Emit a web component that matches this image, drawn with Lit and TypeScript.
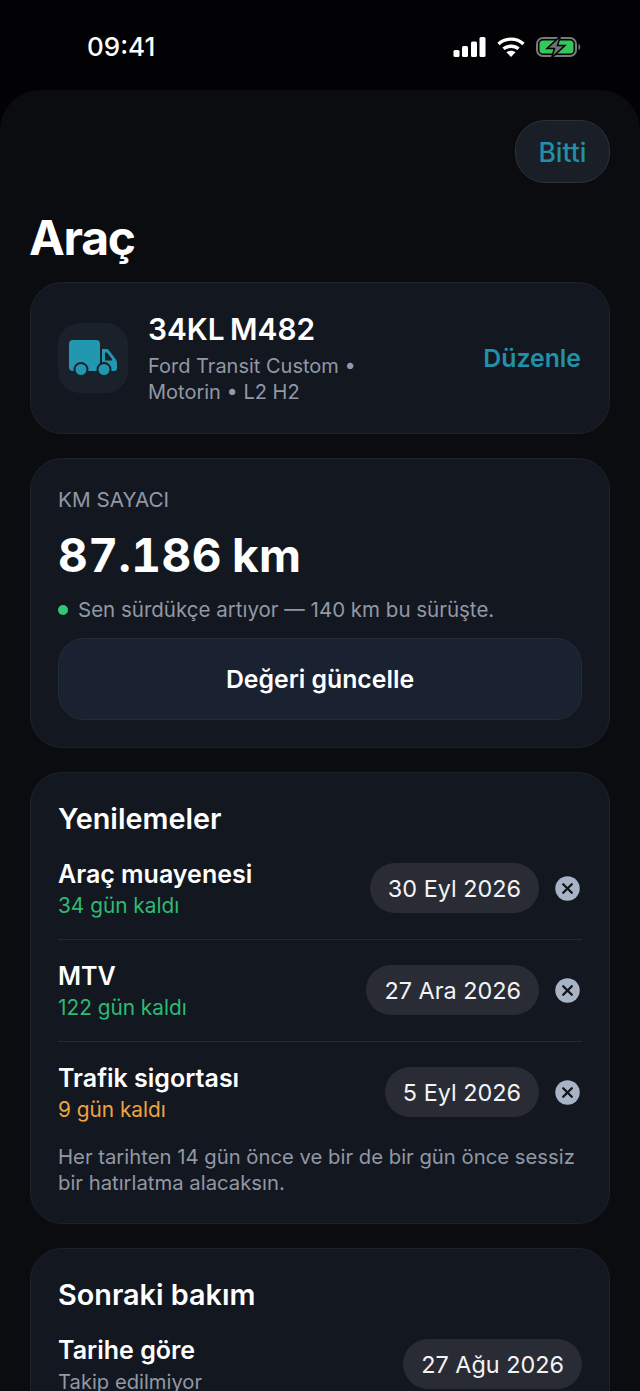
import { LitElement, html, css } from "lit";
import { customElement } from "lit/decorators.js";

const rows = [
  { name: "Araç muayenesi", left: "34 gün kaldı", date: "30 Eyl 2026", warn: false },
  { name: "MTV", left: "122 gün kaldı", date: "27 Ara 2026", warn: false },
  { name: "Trafik sigortası", left: "9 gün kaldı", date: "5 Eyl 2026", warn: true },
];

@customElement("app-root")
export class AppRoot extends LitElement {
  static styles = css`
    :host { display: block; width: 640px; height: 1391px; overflow: hidden; background: #020204; font-family: Inter, "Noto Sans", sans-serif; color: #fff; }
    * { box-sizing: border-box; }
    .status { height: 90px; display: flex; align-items: flex-start; justify-content: space-between; padding: 32px 59px 0 87px; }
    .time { font-size: 26px; line-height: 30px; font-weight: 500; }
    .icons { display: flex; align-items: center; gap: 11px; height: 30px; }
    .sheet { background: #0a0c10; border-radius: 40px 40px 0 0; padding: 30px 30px 0; height: 1301px; display: flex; flex-direction: column; }
    .top { display: flex; justify-content: flex-end; }
    .done { width: 95px; height: 63px; border-radius: 30px; background: #1a1f27; border: 1px solid #2d3239; color: #2190a8; font-size: 26.500px; font-weight: 500; display: flex; align-items: center; justify-content: center; }
    h1 { margin: 26px 0 15px -1px; font-size: 48px; line-height: 58px; font-weight: 700; letter-spacing: -1.300px; }
    .card { background: #131720; border: 1px solid #1e2229; border-radius: 32px; padding: 27px; margin-bottom: 24px; flex: none; }
    .veh { height: 152px; display: flex; align-items: center; padding: 0 28px 0 27px; gap: 21px; }
    .veh-icon { width: 70px; height: 70px; border-radius: 22px; background: #1b212b; display: flex; align-items: center; justify-content: center; flex: none; }
    .veh-main { flex: 1; margin-left: -1px; }
    .plate { font-size: 29.800px; line-height: 36px; font-weight: 600; word-spacing: -2px; margin-bottom: 6px; }
    .sub { font-size: 20px; line-height: 26px; color: #9298a5; width: 240px; }
    .edit { color: #2190a8; font-size: 24.800px; font-weight: 600; }
    .km { height: 290px; padding-top: 28px; }
    .label { font-size: 20.700px; line-height: 26px; color: #9298a5; }
    .value { font-size: 46px; line-height: 56px; font-weight: 700; font-variant-numeric: tabular-nums; letter-spacing: 0.500px; word-spacing: -3px; margin-top: 14px; }
    .live { display: flex; align-items: center; gap: 10px; font-size: 20.500px; line-height: 26px; color: #9298a5; margin-top: 14px; }
    .dot { width: 10px; height: 10px; border-radius: 50%; background: #2fc874; }
    .update { height: 82px; margin-top: 15px; border-radius: 26px; background: #1a2130; border: 1px solid #242b38; display: flex; align-items: center; justify-content: center; font-size: 24.800px; font-weight: 580; }
    h2 { margin: 0; font-size: 28.800px; line-height: 36px; font-weight: 580; }
    .row { display: flex; align-items: center; height: 103px; margin-bottom: -1px; border-bottom: 1px solid #262a32; }
    .row:last-child { height: 102px; margin-bottom: 0; border-bottom: none; }
    .info { flex: 1; padding-top: 2px; }
    .next .info { padding-top: 1px; }
    .name { font-size: 25px; line-height: 30px; font-weight: 600; }
    .left { font-size: 20.800px; line-height: 26px; color: #2dbb72; margin-top: 4px; }
    .left.warn { color: #eea53d; }
    .left.muted { color: #9298a5; font-size: 20.200px; }
    .pill { height: 50px; padding: 0 18px; border-radius: 25px; background: #292c35; display: flex; align-items: center; font-size: 23.400px; color: #f2f3f5; }
    .x { width: 25px; height: 25px; margin-left: 16px; margin-right: 2px; flex: none; }
    .note { font-size: 20.300px; line-height: 26px; color: #9298a5; margin-top: 1px; }
    .renew { height: 452px; padding-top: 28px; }
    .next { padding-top: 28px; }
  `;

  private x() {
    return html`<svg class="x" viewBox="0 0 25 25"><circle cx="12.500" cy="12.500" r="12.200" fill="#a8b4c5"/><path d="M8.200 8.200 16.800 16.800M16.800 8.200 8.200 16.800" stroke="#10131a" stroke-width="2.300" stroke-linecap="round"/></svg>`;
  }

  render() {
    return html`
      <div class="status">
        <div class="time">09:41</div>
        <div class="icons">
          <svg width="33" height="20" viewBox="0 0 33 20" fill="#fff">
            <rect x="0.500" y="13" width="6" height="7" rx="1.500"/><rect x="9" y="9" width="6" height="11" rx="1.500"/><rect x="18" y="4.500" width="6" height="15.500" rx="1.500"/><rect x="26.500" y="0" width="6" height="20" rx="1.500"/>
          </svg>
          <svg width="28" height="20" viewBox="0 0 28 20" fill="none" stroke="#fff" stroke-width="3.400">
            <path d="M1.500 7C8.500 0.500 19.500 0.500 26.500 7"/><path d="M6.500 11.800C10.500 8.300 17.500 8.300 21.500 11.800"/><path d="M14 20 9.500 15.300C12 13.300 16 13.300 18.500 15.300Z" fill="#fff" stroke="none"/>
          </svg>
          <svg width="45" height="20" viewBox="0 0 45 20">
            <rect x="1" y="1" width="39" height="18" rx="6" fill="none" stroke="#77797c" stroke-width="2"/>
            <rect x="3.500" y="3.500" width="34" height="13" rx="3.500" fill="#35c759"/>
            <path d="M42.500 7c2.300.5 2.300 5.500 0 6z" fill="#77797c"/>
            <path d="M24.500 -1 11 11.500h7.500L15.500 21 29 8.500h-7.500z" fill="#6e7073" stroke="#020204" stroke-width="1.500"/>
          </svg>
        </div>
      </div>
      <div class="sheet">
        <div class="top"><div class="done">Bitti</div></div>
        <h1>Araç</h1>
        <div class="card veh">
          <div class="veh-icon">
            <svg width="48" height="36" viewBox="0 0 48 36" fill="#2297b0">
              <path d="M4 0H27a4 4 0 0 1 4 4V31H4a4 4 0 0 1-4-4V4a4 4 0 0 1 4-4Z"/>
              <path d="M33 9h4c1.500 0 2.500.6 3.300 1.700L46.600 19c.9 1.200 1.400 2.500 1.400 4v5a3 3 0 0 1-3 3H33Z"/>
              <path d="M36 12.500h2l5 6.500v1.500h-7Z" fill="#1b212b"/>
              <circle cx="12" cy="29.500" r="6.500" fill="#2297b0" stroke="#1b212b" stroke-width="2"/>
              <circle cx="35" cy="29.500" r="6.500" fill="#2297b0" stroke="#1b212b" stroke-width="2"/>
            </svg>
          </div>
          <div class="veh-main">
            <div class="plate">34KL M482</div>
            <div class="sub">Ford Transit Custom • Motorin • L2 H2</div>
          </div>
          <div class="edit">Düzenle</div>
        </div>
        <div class="card km">
          <div class="label">KM SAYACI</div>
          <div class="value">87.186 km</div>
          <div class="live"><span class="dot"></span>Sen sürdükçe artıyor — 140 km bu sürüşte.</div>
          <div class="update">Değeri güncelle</div>
        </div>
        <div class="card renew">
          <h2>Yenilemeler</h2>
          <div>
            ${rows.map(r => html`
              <div class="row">
                <div class="info"><div class="name">${r.name}</div><div class="left ${r.warn ? "warn" : ""}">${r.left}</div></div>
                <div class="pill">${r.date}</div>
                ${this.x()}
              </div>`)}
          </div>
          <div class="note">Her tarihten 14 gün önce ve bir de bir gün önce sessiz bir hatırlatma alacaksın.</div>
        </div>
        <div class="card next">
          <h2>Sonraki bakım</h2>
          <div class="row">
            <div class="info"><div class="name">Tarihe göre</div><div class="left muted">Takip edilmiyor</div></div>
            <div class="pill">27 Ağu 2026</div>
          </div>
        </div>
      </div>
    `;
  }
}
